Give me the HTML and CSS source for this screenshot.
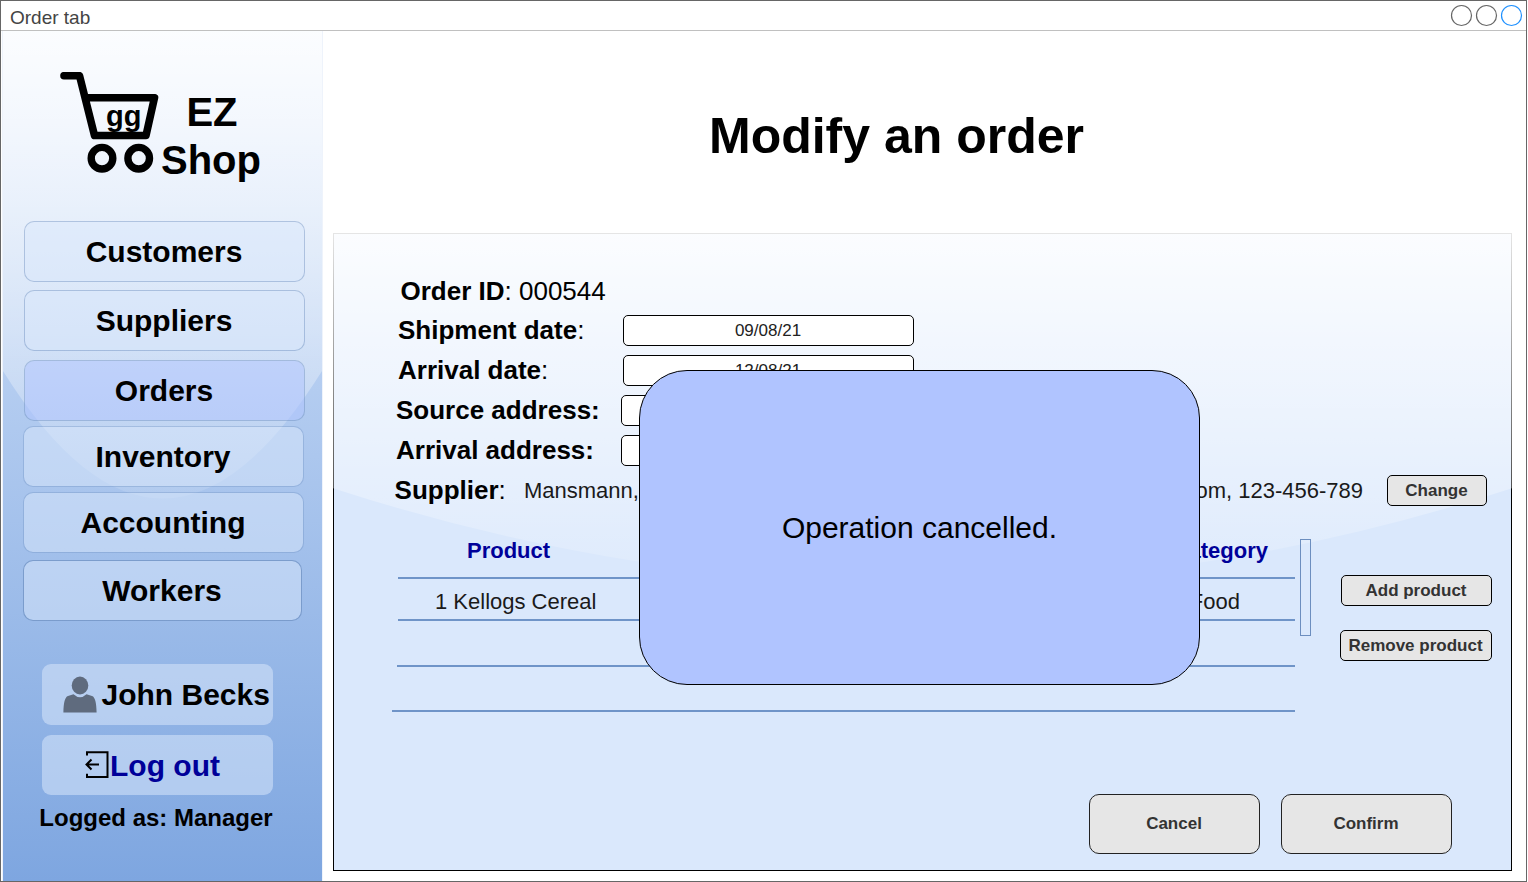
FILE: index.html
```html
<!DOCTYPE html>
<html lang="en">
<head>
<meta charset="utf-8">
<title>Order tab</title>
<link rel="stylesheet" href="styles.css">
</head>
<body>
<div class="window">
  <header class="titlebar">
    <span class="titlebar-text">Order tab</span>
    <svg class="window-controls" width="76" height="29" viewBox="0 0 76 29">
      <circle class="ring" cx="11.500" cy="14.500" r="10"/>
      <circle class="ring" cx="36.500" cy="14.500" r="10"/>
      <circle class="ring ring-blue" cx="61.500" cy="14.500" r="10"/>
    </svg>
  </header>
  <div class="body">
    <aside class="sidebar">
      <svg class="glass" viewBox="0 0 100 100" preserveAspectRatio="none">
        <defs>
          <linearGradient id="shine" x1="0" y1="0" x2="0" y2="1">
            <stop offset="0" stop-color="#fff" stop-opacity=".9"/>
            <stop offset="1" stop-color="#fff" stop-opacity=".1"/>
          </linearGradient>
        </defs>
        <path d="M0 0V40Q50 70 100 40V0Z" fill="url(#shine)"/>
      </svg>
      <div class="logo">
        <div class="cart">
          <svg width="100" height="104" viewBox="0 0 100 104" fill="none" stroke="#000">
            <path d="M4 3.700H19.500L34.500 63.500H86L94.500 25.700H28" stroke-width="7.600" stroke-linecap="round" stroke-linejoin="round"/>
            <circle cx="42" cy="86.200" r="10.800" stroke-width="7.400"/>
            <circle cx="78.700" cy="86.200" r="10.800" stroke-width="7.400"/>
          </svg>
          <span class="cart-text">gg</span>
        </div>
        <div class="brand"><span class="brand-top">EZ</span><span>Shop</span></div>
      </div>
      <nav class="nav">
        <a class="nav-item">Customers</a>
        <a class="nav-item suppliers">Suppliers</a>
        <a class="nav-item orders">Orders</a>
        <a class="nav-item inventory">Inventory</a>
        <a class="nav-item accounting">Accounting</a>
        <a class="nav-item workers">Workers</a>
      </nav>
      <div class="account">
        <a class="account-item user">
          <svg width="34" height="37" viewBox="0 0 34 37" fill="#5f6b7e">
            <ellipse cx="17" cy="9.500" rx="8.300" ry="9"/>
            <path d="M.4 36.500C.6 27 1.800 21 5 20L10.500 18.300Q17 24.300 23.500 18.300L29 20C32.200 21 33.400 27 33.600 36.500Z"/>
          </svg>
          <span>John Becks</span>
        </a>
        <a class="account-item logout">
          <svg width="24" height="28" viewBox="0 0 24 28" fill="none" stroke="#000" stroke-width="2">
            <path d="M2 4.500V1.200H22.500V26H2V22.700M1.500 13.500H14M6.500 8.500L1.500 13.500L6.500 18.500"/>
          </svg>
          <span>Log out</span>
        </a>
        <div class="role">Logged as: Manager</div>
      </div>
    </aside>
    <main class="main">
      <h1 class="title">Modify an order</h1>
      <section class="panel">
        <svg class="glass" viewBox="0 0 100 100" preserveAspectRatio="none">
          <path d="M0 0V40Q50 70 100 40V0Z" fill="url(#shine)"/>
        </svg>
        <div class="form">
          <div class="row row-id"><span><b>Order ID</b>: 000544</span></div>
          <div class="row row-date"><span class="label"><b>Shipment date</b>:</span><div class="field">09/08/21</div></div>
          <div class="row row-date"><span class="label"><b>Arrival date</b>:</span><div class="field">12/08/21</div></div>
          <div class="row row-address"><span class="label"><b>Source address:</b></span><div class="field"></div></div>
          <div class="row row-address"><span class="label"><b>Arrival address:</b></span><div class="field"></div></div>
          <div class="row row-supplier">
            <span class="label"><b>Supplier</b>:</span>
            <span class="value">Mansmann,</span>
            <span class="value contact">com, 123-456-789</span>
            <button class="btn change">Change</button>
          </div>
        </div>
        <div class="products">
          <div class="table">
            <div class="tr head"><span>Product</span><span>Category</span></div>
            <div class="tr item"><span>1 Kellogs Cereal</span><span>Food</span></div>
            <div class="tr empty"></div>
            <div class="tr last"></div>
          </div>
          <div class="scrollbar"></div>
          <div class="actions">
            <button class="btn add">Add product</button>
            <button class="btn remove">Remove product</button>
          </div>
        </div>
        <div class="footer">
          <button class="btn large">Cancel</button>
          <button class="btn large">Confirm</button>
        </div>
        <div class="dialog">Operation cancelled.</div>
      </section>
    </main>
  </div>
</div>
</body>
</html>
```
FILE: styles.css
```css
* { box-sizing: border-box; }
body {
  margin: 0;
  background: #fff;
  color: #000;
  font-family: "Liberation Sans", Arial, sans-serif;
  overflow: hidden;
}
.window {
  width: 1527px;
  height: 882px;
  border: 1px solid #666;
  display: flex;
  flex-direction: column;
}
.titlebar {
  height: 30px;
  flex: none;
  border-bottom: 1px solid #c0c0c0;
  display: flex;
  align-items: center;
  justify-content: space-between;
  padding-left: 9px;
}
.titlebar-text { font-size: 19px; line-height: 22px; color: #444; padding-top: 4px; }
.window-controls { display: block; }
.ring { fill: none; stroke: #666; stroke-width: 1.2; }
.ring-blue { stroke: #1e90ff; }
.body { flex: 1; display: flex; min-height: 0; }

.glass {
  position: absolute;
  left: 0;
  top: 0;
  width: 100%;
  height: 100%;
}
.sidebar {
  position: relative;
  width: 321px;
  margin-left: 1px;
  background: linear-gradient(#dae8fc, #7ea6e0) padding-box;
  border-left: 1px solid #eef3fb;
  border-right: 1px solid #eef3fb;
  display: flex;
  flex-direction: column;
}
.logo, .nav, .account { position: relative; }
.logo { display: flex; height: 190px; padding: 41px 0 0 57px; }
.cart { position: relative; width: 100px; }
.cart svg { display: block; }
.cart-text {
  position: absolute;
  left: 46px;
  top: 27px;
  font-size: 29px;
  line-height: 34px;
  font-weight: bold;
}
.brand {
  display: flex;
  flex-direction: column;
  align-items: center;
  font-size: 40px;
  line-height: 48px;
  font-weight: bold;
  padding-top: 16px;
  padding-left: 1px;
}
.brand-top { padding-left: 2px; }
.nav { height: 443px; display: flex; flex-direction: column; padding-left: 21px; }
.nav-item {
  display: flex;
  align-items: center;
  justify-content: center;
  width: 281px;
  height: 61px;
  border: 1px solid rgba(108, 142, 191, .45);
  border-radius: 10px;
  background: rgba(218, 232, 252, .5) padding-box;
  font-size: 30px;
  font-weight: bold;
  padding-right: 1px;
}
.suppliers { margin-top: 8px; }
.orders { margin-top: 9px; background-color: rgba(176, 196, 255, .5); }
.inventory, .accounting { margin-top: 5px; margin-left: -1px; border-color: rgba(108, 142, 191, .35); }
.workers { margin-top: 7px; margin-left: -1px; width: 279px; border-color: rgba(108, 142, 191, .7); }
.account { padding-left: 39px; }
.account-item {
  display: flex;
  align-items: center;
  width: 231px;
  height: 61px;
  border-radius: 9px;
  background: rgba(218, 232, 252, .52);
  font-size: 30px;
  font-weight: bold;
}
.user { padding-left: 21px; }
.user span { margin-left: 4.5px; white-space: nowrap; }
.logout { margin-top: 10px; height: 60px; padding-left: 43px; color: #009; }
.logout span { margin-left: 1px; padding-top: 1px; }
.role {
  width: 240px;
  margin: 9px 0 0 -6px;
  font-size: 24px;
  line-height: 28px;
  font-weight: bold;
  text-align: center;
  white-space: nowrap;
}

.main { flex: 1; padding-left: 10px; }
.title {
  margin: 0;
  padding-right: 66px;
  height: 202px;
  line-height: 210px;
  font-size: 50px;
  text-align: center;
}
.panel {
  position: relative;
  width: 1179px;
  height: 638px;
  border: 1px solid #000;
  background: #dae8fc;
}
.panel > .glass { left: -1px; top: -1px; width: 1179px; height: 638px; }
.form {
  position: relative;
  display: flex;
  flex-direction: column;
  gap: 9px;
  padding: 41px 24px 0 60px;
  font-size: 26px;
}
.row { display: flex; align-items: center; height: 31px; white-space: nowrap; }
.row-id { padding: 2px 0 0 6.5px; }
.row-date { padding-left: 4px; }
.row-address { padding-left: 2px; }
.row-supplier { padding-left: .6px; }
.row-date .label, .row-address .label { width: 225px; }
.field {
  display: flex;
  align-items: center;
  justify-content: center;
  width: 291px;
  height: 31px;
  border: 1px solid #000;
  border-radius: 5px;
  background: #fff;
  color: #222;
  font-size: 17px;
  padding-right: 1px;
}
.row-supplier .label { width: 129.400px; }
.value { font-size: 22px; color: #1a1a1a; }
.contact { margin-left: auto; }
.btn {
  display: flex;
  align-items: center;
  justify-content: center;
  height: 31px;
  padding: 0 1px 0 0;
  border: 1px solid #000;
  border-radius: 5px;
  background: #e6e6e6;
  color: #333;
  font: bold 17px "Liberation Sans", Arial, sans-serif;
  white-space: nowrap;
}
.change { width: 100px; margin-left: 24px; }
.products { position: relative; display: flex; height: 206px; padding: 17px 0 0 58px; }
.table { width: 903px; display: flex; flex-direction: column; }
.tr {
  display: flex;
  justify-content: space-between;
  align-items: center;
  border-bottom: 2px solid #6f94c8;
  font-size: 22px;
  margin-left: 6px;
}
.head { height: 56px; padding: 2px 27px 0 69px; font-weight: bold; color: #009; }
.item { height: 42px; padding: 6px 55px 0 37px; color: #1a1a1a; }
.empty { height: 46px; margin-left: 5px; }
.last { height: 45px; margin-left: 0; }
.scrollbar {
  width: 11px;
  height: 97px;
  margin: 16px 0 0 5px;
  border: 1px solid #6c8ebf;
}
.actions { display: flex; flex-direction: column; align-items: flex-end; margin: 52px 0 0 29px; gap: 24px; }
.add { width: 151px; }
.remove { width: 152px; }
.footer { position: relative; display: flex; gap: 21px; padding: 82px 0 0 755px; }
.large { width: 171px; height: 60px; border-radius: 10px; border-color: #222; }
.dialog {
  position: absolute;
  left: 305px;
  top: 136px;
  width: 561px;
  height: 315px;
  border: 1px solid #000;
  border-radius: 48px;
  background: #b0c4ff;
  display: flex;
  align-items: center;
  justify-content: center;
  font-size: 30px;
}
```
